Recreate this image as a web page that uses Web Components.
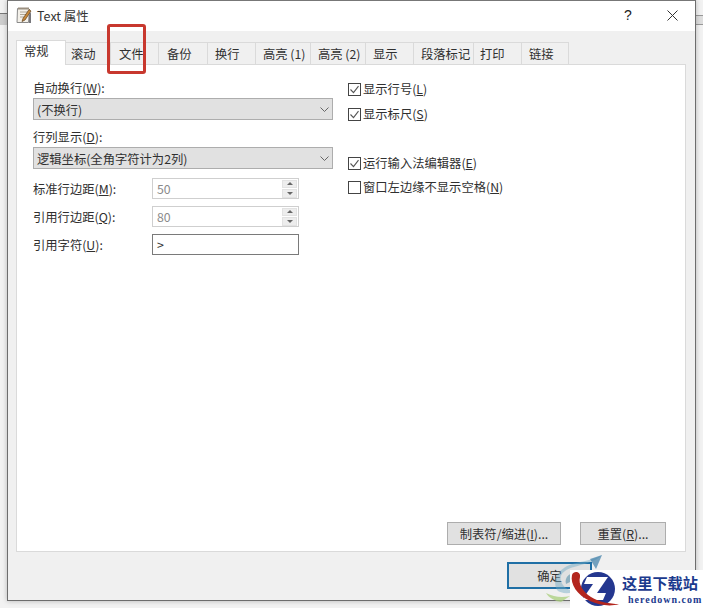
<!DOCTYPE html>
<html>
<head>
<meta charset="utf-8">
<title>Text 属性</title>
<style>
    html, body { margin: 0; height: 100%; }
    body {
        width: 703px;
        height: 608px;
        overflow: hidden;
        background: #f2f2f2;
        font: 12.3px "Noto Sans CJK SC", "Liberation Sans", sans-serif;
        color: #303030;
    }
    u { text-underline-offset: 1px; }
</style>
</head>
<body>
<desk-scraps></desk-scraps>
<prop-dialog>
    <title-bar slot="title">Text 属性</title-bar>

    <tab-strip slot="tabs">
        <tab-item selected w="50" pad="7">常规</tab-item>
        <tab-item w="45" pad="5">滚动</tab-item>
        <tab-item w="48" pad="8">文件</tab-item>
        <tab-item w="49" pad="8">备份</tab-item>
        <tab-item w="48" pad="7">换行</tab-item>
        <tab-item w="55" pad="7">高亮 (1)</tab-item>
        <tab-item w="55" pad="7">高亮 (2)</tab-item>
        <tab-item w="48" pad="7">显示</tab-item>
        <tab-item w="60" pad="7">段落标记</tab-item>
        <tab-item w="48" pad="6">打印</tab-item>
        <tab-item w="47" pad="7">链接</tab-item>
    </tab-strip>

    <tab-page slot="page">
        <div slot="left">
            <field-label>自动换行(<u>W</u>):</field-label>
            <combo-box gap="2">(不换行)</combo-box>
            <field-label gap="9">行列显示(<u>D</u>):</field-label>
            <combo-box gap="2">逻辑坐标(全角字符计为2列)</combo-box>
            <num-row gap="9" spin value="50">标准行边距(<u>M</u>):</num-row>
            <num-row gap="7" spin value="80">引用行边距(<u>Q</u>):</num-row>
            <num-row gap="7" value="&gt;">引用字符(<u>U</u>):</num-row>
        </div>
        <div slot="right">
            <check-row checked>显示行号(<u>L</u>)</check-row>
            <check-row gap="7" checked>显示标尺(<u>S</u>)</check-row>
            <check-row gap="31" checked>运行输入法编辑器(<u>E</u>)</check-row>
            <check-row gap="6">窗口左边缘不显示空格(<u>N</u>)</check-row>
        </div>
        <push-button slot="actions" w="114">制表符/缩进(<u>I</u>)...</push-button>
        <push-button slot="actions" w="86">重置(<u>R</u>)...</push-button>
    </tab-page>

    <push-button slot="footer" w="85" h="27" primary>确定</push-button>
</prop-dialog>
<mark-box></mark-box>
<site-stamp></site-stamp>

<script>
// small helper, every element below is just a template + optional attributes
function shadow(el, html) {
    const root = el.attachShadow({ mode: 'open' });
    root.innerHTML = html;
    return root;
}

// bits of the editor window that peek out behind the dialog
class DeskScraps extends HTMLElement {
    constructor() {
        super();
        shadow(this, `
            <style>
                :host { position: absolute; left: 0; top: 0; width: 703px; height: 608px; }
                .l { position: absolute; left: 0; top: 13px; width: 7px; height: 11px; background: #cdcdcd; border-top: 1px solid #777; }
                .r {
                    position: absolute; left: 696px; top: 15px; width: 7px; height: 10px;
                    background: #dedede; border-top: 1px solid #999; border-bottom: 1px solid #999;
                    box-sizing: border-box;
                }
            </style>
            <div class="l"></div>
            <div class="r"></div>
        `);
    }
}

class PropDialog extends HTMLElement {
    constructor() {
        super();
        shadow(this, `
            <style>
                :host {
                    display: flex;
                    flex-direction: column;
                    position: relative;
                    box-sizing: border-box;
                    width: 689px;
                    height: 601px;
                    margin-left: 7px;
                    background: #f0f0f0;
                    border: 1px solid #6d6d6d;
                    border-top-color: #777;
                    box-shadow: 0 0 5px rgba(0, 0, 0, 0.25);
                }
                .body { flex: 1; display: flex; flex-direction: column; padding: 9px 9px 0 8px; min-height: 0; }
                .footer { display: flex; padding: 10px 0 0 499px; height: 38px; box-sizing: content-box; }
            </style>
            <slot name="title"></slot>
            <div class="body">
                <slot name="tabs"></slot>
                <slot name="page"></slot>
            </div>
            <div class="footer"><slot name="footer"></slot></div>
        `);
    }
}

class TitleBar extends HTMLElement {
    constructor() {
        super();
        shadow(this, `
            <style>
                :host {
                    display: flex;
                    align-items: center;
                    height: 30px;
                    background: #fff;
                    padding: 0 0 2px 7px;
                    box-sizing: border-box;
                    flex: none;
                }
                svg { width: 18px; height: 18px; margin-right: 4px; }
                .text { flex: 1; color: #333; font-size: 12.5px; }
                .help { width: 12px; margin-right: 33px; text-align: center; font: 14px "Liberation Sans", sans-serif; color: #222; }
                .close { margin-right: 17px; display: block; width: 11px; height: 11px; }
            </style>
            <svg viewBox="0 0 18 18">
                <path d="M2.500 2.500h11l1 1-1 13H2z" fill="#f4f1ea" stroke="#8a8a8a"/>
                <path d="M3 2.500h11" stroke="#9a8f80" stroke-width="2"/>
                <path d="M5 6h7M5 8.500h6M5 11h4" stroke="#b0a896"/>
                <path d="M7 15.500l1-3 6-9 2 1.500-6 9z" fill="#c98a3a" stroke="#5c3d1c" stroke-width=".7"/>
                <path d="M14 17V9l2-3v11z" fill="#77777c"/>
            </svg>
            <span class="text"><slot></slot></span>
            <span class="help">?</span>
            <svg class="close" viewBox="0 0 11 11"><path d="M.5.5l10 10M10.500.5l-10 10" stroke="#333" fill="none"/></svg>
        `);
    }
}

class TabStrip extends HTMLElement {
    constructor() {
        super();
        shadow(this, `
            <style>
                :host { display: flex; align-items: flex-end; height: 25px; flex: none; position: relative; z-index: 1; margin-bottom: -1px; }
            </style>
            <slot></slot>
        `);
    }
}

class TabItem extends HTMLElement {
    constructor() {
        super();
        const on = this.hasAttribute('selected');
        shadow(this, `
            <style>
                :host {
                    display: block;
                    box-sizing: border-box;
                    flex: none;
                    width: ${this.getAttribute('w')}px;
                    height: ${on ? 25 : 23}px;
                    line-height: ${on ? 20 : 22}px;
                    padding-left: ${this.getAttribute('pad')}px;
                    background: ${on ? '#fff' : '#f0f0f0'};
                    border: 1px solid #dadada;
                    border-left-width: ${on ? 1 : 0}px;
                    border-bottom: ${on ? '0' : '1px solid #dadada'};
                    white-space: nowrap;
                }
            </style>
            <slot></slot>
        `);
    }
}

class TabPage extends HTMLElement {
    constructor() {
        super();
        shadow(this, `
            <style>
                :host {
                    display: flex;
                    flex-direction: column;
                    flex: 1;
                    box-sizing: border-box;
                    background: #fff;
                    border: 1px solid #dadada;
                    padding: 15px 19px 6px 16px;
                    height: 487px;
                }
                .cols { flex: 1; display: grid; grid-template-columns: 300px 1fr; column-gap: 15px; align-content: start; }
                .actions { display: flex; justify-content: flex-end; gap: 19px; }
            </style>
            <div class="cols">
                <slot name="left"></slot>
                <slot name="right"></slot>
            </div>
            <div class="actions"><slot name="actions"></slot></div>
        `);
    }
}

class FieldLabel extends HTMLElement {
    constructor() {
        super();
        shadow(this, `
            <style>
                :host { display: block; height: 16px; line-height: 16px; margin-top: ${this.getAttribute('gap') || 0}px; white-space: nowrap; }
            </style>
            <slot></slot>
        `);
    }
}

class ComboBox extends HTMLElement {
    constructor() {
        super();
        shadow(this, `
            <style>
                :host {
                    display: flex;
                    align-items: center;
                    box-sizing: border-box;
                    height: 22px;
                    margin-top: ${this.getAttribute('gap') || 0}px;
                    padding: 1px 3px 0 3px;
                    background: #e1e1e1;
                    border: 1px solid #adadad;
                }
                span { flex: 1; white-space: nowrap; }
                svg { width: 9px; height: 5px; }
            </style>
            <span><slot></slot></span>
            <svg viewBox="0 0 9 5"><path d="M.5.5L4.500 4.500 8.500.5" fill="none" stroke="#666"/></svg>
        `);
    }
}

class NumRow extends HTMLElement {
    constructor() {
        super();
        const spin = this.hasAttribute('spin');
        const value = this.getAttribute('value').replace('>', '&gt;');
        shadow(this, `
            <style>
                :host {
                    display: grid;
                    grid-template-columns: 119px 147px;
                    align-items: center;
                    height: 21px;
                    margin-top: ${this.getAttribute('gap') || 0}px;
                    white-space: nowrap;
                }
                .box {
                    display: flex;
                    align-items: center;
                    box-sizing: border-box;
                    height: 21px;
                    padding: 0 1px 0 4px;
                    background: #fff;
                    border: 1px solid ${spin ? '#cfcfcf' : '#7a7a7a'};
                    color: ${spin ? '#8a8a8a' : '#333'};
                }
                .val { flex: 1; }
                .spin { display: flex; flex-direction: column; gap: 1px; width: 15px; }
                .spin b { display: flex; align-items: center; justify-content: center; height: 8.500px; background: #ededed; border: 1px solid #e2e2e2; box-sizing: border-box; }
                svg { width: 6px; height: 3px; display: block; }
            </style>
            <span><slot></slot></span>
            <div class="box">
                <span class="val">${value}</span>
                ${spin ? `<div class="spin">
                    <b><svg viewBox="0 0 6 3"><path d="M3 0l3 3H0z" fill="#666"/></svg></b>
                    <b><svg viewBox="0 0 6 3"><path d="M0 0h6L3 3z" fill="#666"/></svg></b>
                </div>` : ''}
            </div>
        `);
    }
}

class CheckRow extends HTMLElement {
    constructor() {
        super();
        const on = this.hasAttribute('checked');
        shadow(this, `
            <style>
                :host {
                    display: flex;
                    align-items: center;
                    height: 18px;
                    margin-top: ${this.getAttribute('gap') || 0}px;
                    white-space: nowrap;
                }
                svg { width: 13px; height: 13px; margin-right: 2px; flex: none; }
            </style>
            <svg viewBox="0 0 13 13">
                <rect x=".5" y=".5" width="12" height="12" fill="#fff" stroke="#444"/>
                ${on ? '<path d="M2.500 6.500l3 3.200 5-6.500" fill="none" stroke="#555" stroke-width="1.100"/>' : ''}
            </svg>
            <slot></slot>
        `);
    }
}

class PushButton extends HTMLElement {
    constructor() {
        super();
        const primary = this.hasAttribute('primary');
        shadow(this, `
            <style>
                :host {
                    display: flex;
                    align-items: center;
                    justify-content: center;
                    box-sizing: border-box;
                    flex: none;
                    width: ${this.getAttribute('w')}px;
                    height: ${this.getAttribute('h') || 23}px;
                    background: #e1e1e1;
                    border: ${primary ? '2px solid #1f6fa5' : '1px solid #adadad'};
                    white-space: nowrap;
                }
            </style>
            <slot></slot>
        `);
    }
}

// red annotation drawn over the tab strip
class MarkBox extends HTMLElement {
    constructor() {
        super();
        shadow(this, `
            <style>
                :host {
                    position: absolute;
                    left: 107px;
                    top: 24px;
                    width: 39px;
                    height: 50px;
                    box-sizing: border-box;
                    border: 3px solid #c8382e;
                    border-radius: 3px;
                    z-index: 5;
                }
            </style>
        `);
    }
}

// watermark in the bottom right corner
class SiteStamp extends HTMLElement {
    constructor() {
        super();
        shadow(this, `
            <style>
                :host { position: absolute; left: 0; top: 0; width: 703px; height: 608px; z-index: 6; pointer-events: none; }
                svg { position: absolute; left: 0; top: 0; }
                .panel { position: absolute; left: 570px; top: 570px; width: 133px; height: 38px; background: #fff; }
                .cn {
                    position: absolute; left: 622px; top: 575px;
                    font: 700 15.200px/18px "Liberation Serif", "Noto Sans CJK SC", serif;
                    color: #1b3a8e; white-space: nowrap;
                }
                .en {
                    position: absolute; left: 628px; top: 594px;
                    font: 700 10px/11px "Liberation Serif", serif;
                    letter-spacing: 1px;
                    color: #1b3a8e; white-space: nowrap;
                }
            </style>
            <svg width="703" height="608" viewBox="0 0 703 608">
                <path d="M557 590c-5-11 1-21 15-26 11-3 22-4 30-9-7 7-18 9-28 12-11 3-17 9-11 18 3 4 8 6 14 6-7 3-16 3-20-1z" fill="#6fa9c4" opacity=".45"/>
                <path d="M566 584c-2-7 4-12 14-13-7 2-9 6-8 10z" fill="#3e7f9f" opacity=".5"/>
                <path d="M546 593c8 4 16 5 24 3l-9 6c-6-1-12-4-15-9z" fill="#a9cf7c" opacity=".75"/>
                <path d="M590 559l12-4-6 14z" fill="#3f7fa8" opacity=".7"/>
            </svg>
            <div class="panel"></div>
            <svg width="703" height="608" viewBox="0 0 703 608">
                <circle cx="598" cy="589" r="17" fill="#24378f"/>
                <path d="M587 577h21l-11 16h9l-3 7h-21l11-16h-9z" fill="#fff"/>
                <path d="M572 575c-2 9 5 20 18 26 9 4 20 6 29 3-9 0-20-2-28-7-8-5-13-13-11-20 1-5-6-7-8-2z" fill="#b3261e"/>
            </svg>
            <div class="cn">这里下载站</div>
            <div class="en">heredown.com</div>
        `);
    }
}

customElements.define('desk-scraps', DeskScraps);
customElements.define('prop-dialog', PropDialog);
customElements.define('title-bar', TitleBar);
customElements.define('tab-strip', TabStrip);
customElements.define('tab-item', TabItem);
customElements.define('tab-page', TabPage);
customElements.define('field-label', FieldLabel);
customElements.define('combo-box', ComboBox);
customElements.define('num-row', NumRow);
customElements.define('check-row', CheckRow);
customElements.define('push-button', PushButton);
customElements.define('mark-box', MarkBox);
customElements.define('site-stamp', SiteStamp);
</script>
</body>
</html>
